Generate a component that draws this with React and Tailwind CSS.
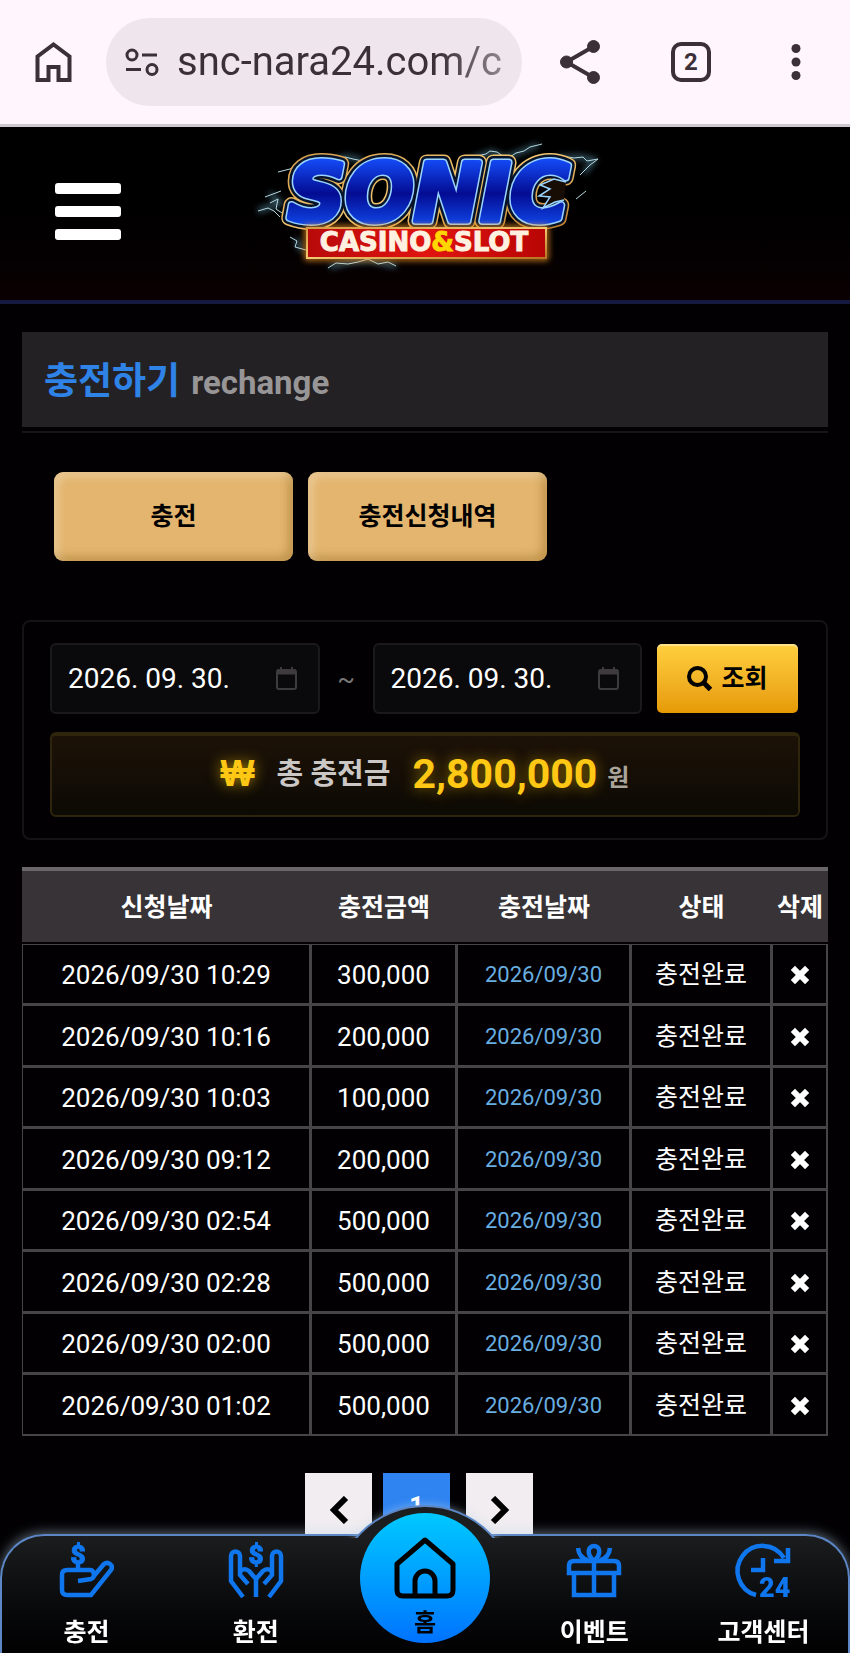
import { useState } from 'react';

const deposits = [
  { requestedAt: '2026/09/30 10:29', amount: '300,000', paidAt: '2026/09/30', status: '충전완료' },
  { requestedAt: '2026/09/30 10:16', amount: '200,000', paidAt: '2026/09/30', status: '충전완료' },
  { requestedAt: '2026/09/30 10:03', amount: '100,000', paidAt: '2026/09/30', status: '충전완료' },
  { requestedAt: '2026/09/30 09:12', amount: '200,000', paidAt: '2026/09/30', status: '충전완료' },
  { requestedAt: '2026/09/30 02:54', amount: '500,000', paidAt: '2026/09/30', status: '충전완료' },
  { requestedAt: '2026/09/30 02:28', amount: '500,000', paidAt: '2026/09/30', status: '충전완료' },
  { requestedAt: '2026/09/30 02:00', amount: '500,000', paidAt: '2026/09/30', status: '충전완료' },
  { requestedAt: '2026/09/30 01:02', amount: '500,000', paidAt: '2026/09/30', status: '충전완료' },
];

const Logo = () => (
  <svg viewBox="-5 0 360 150" className="w-[360px]" role="img" aria-label="SONIC CASINO&SLOT">
    <defs>
      <linearGradient id="letterBlue" x1="0" y1="0" x2="0" y2="1">
        <stop offset="0.1" stopColor="#1650ff" />
        <stop offset="0.5" stopColor="#030c92" />
        <stop offset="0.9" stopColor="#1250f6" />
      </linearGradient>
      <linearGradient id="gold" x1="0" y1="0" x2="1" y2="1">
        <stop offset="0" stopColor="#d49a45" />
        <stop offset="0.5" stopColor="#f3c870" />
        <stop offset="1" stopColor="#b87420" />
      </linearGradient>
      <linearGradient id="bannerRed" x1="0" y1="0" x2="1" y2="0">
        <stop offset="0" stopColor="#b80a0a" />
        <stop offset="0.5" stopColor="#e01410" />
        <stop offset="1" stopColor="#b80505" />
      </linearGradient>
      <filter id="glow" x="-20%" y="-50%" width="140%" height="200%">
        <feGaussianBlur stdDeviation="3" />
      </filter>
      <text
        id="wordmark"
        x="38"
        y="90"
        fontFamily="DejaVu Sans, sans-serif"
        fontWeight="700"
        fontStyle="italic"
        fontSize="80"
        strokeLinejoin="round"
      >
        SONIC
      </text>
    </defs>

    {/* Lightning */}
    <g fill="none" stroke="#6fb4d0" strokeWidth="4" opacity="0.6" filter="url(#glow)">
      <path d="M84 30 L96 26 L112 29 M215 31 L242 21 L255 27 L288 14" />
      <path d="M306 27 L330 26 L344 29 L334 42 M8 80 L30 72 L20 62 M46 108 L52 120" />
      <path d="M80 136 L98 131 L120 129 L146 135" />
    </g>
    <g fill="none" stroke="#b5d9e2" strokeWidth="1" strokeLinejoin="bevel">
      <path d="M82 30 L90 28 L95 26 L103 28 L113 30 M28 41 L40 38 L46 34" />
      <path d="M210 32 L222 26 L236 23 L240 20 L247 21 L257 28 L266 22 L274 20 L280 16 L292 13" />
      <path d="M300 30 L312 25 L324 27 L333 26 L337 30 L348 28 L340 34 L330 44 M336 60 L326 68" />
      <path d="M8 80 L18 77 L24 80 L30 86 M15 66 L23 63 L31 60 M20 72 L28 68 L26 78 L32 82" />
      <path d="M40 106 L47 110 L45 116 L56 119 M78 137 L86 132 L98 133 L108 131 L118 128 L128 133 L138 131 L146 135" />
    </g>

    {/* Wordmark, outlines from widest to narrowest */}
    <use href="#wordmark" stroke="url(#gold)" strokeWidth="16" />
    <use href="#wordmark" stroke="#06132b" strokeWidth="13" />
    <use href="#wordmark" stroke="#9ad4ff" strokeWidth="8" />
    <use href="#wordmark" fill="url(#letterBlue)" stroke="url(#letterBlue)" strokeWidth="5" />
    {/* Spikes in the mouth of the last letter */}
    <path d="M316 51 L304 48 L290 54 L300 58 L289 65 L300 66 L293 77 L305 71 L314 69 Z" fill="#170d05" />
    <path
      d="M316 51 L304 48 L290 54 L300 58 L289 65 L300 66 L293 77 L305 71 L314 69"
      fill="none"
      stroke="#9ad4ff"
      strokeWidth="1.500"
    />

    {/* Banner */}
    <rect x="57" y="97" width="239" height="30" fill="none" stroke="#ff9a20" strokeWidth="4" filter="url(#glow)" />
    <rect x="57" y="97" width="239" height="30" fill="url(#bannerRed)" stroke="url(#gold)" strokeWidth="2" />
    <text
      x="174"
      y="120"
      textAnchor="middle"
      fill="#fff1e0"
      stroke="#fff1e0"
      fontFamily="DejaVu Sans, sans-serif"
      fontWeight="700"
      fontSize="26"
    >
      CASINO<tspan fill="#ffd600" stroke="#ffd600">&amp;</tspan>SLOT
    </text>
  </svg>
);

const BrowserBar = () => (
  <div className="flex h-[127px] items-center border-b-[3px] border-[#cfc8ce] bg-[#fff5fd] text-[#3b3038]">
    <button type="button" aria-label="Home" className="ml-[35px] shrink-0">
      <svg width="37" height="40" viewBox="0 0 37 40" fill="none" stroke="currentColor" strokeWidth="4">
        <path d="M2.500 38 V14.500 L18.500 2.500 L34.500 14.500 V38 H23.500 V25 H13.500 V38 Z" />
      </svg>
    </button>
    <div className="ml-[34px] flex h-[88px] min-w-0 flex-1 items-center overflow-hidden rounded-full bg-[#efe5ec] pl-[19px]">
      <svg width="34" height="28" viewBox="0 0 34 28" fill="none" stroke="currentColor" strokeWidth="3" className="shrink-0">
        <circle cx="7" cy="7" r="5" />
        <path d="M17 7 H32 M1 21.500 H16" />
        <circle cx="27" cy="21.500" r="5" />
      </svg>
      <span className="ml-[18px] whitespace-nowrap bg-linear-to-r from-[#3b3038] from-80% to-[#8f868c] bg-clip-text text-[40px] leading-[52px] text-transparent">
        snc-nara24.com/c
      </span>
    </div>
    <button type="button" aria-label="Share" className="ml-[38px] shrink-0">
      <svg width="40" height="44" viewBox="0 0 40 44" fill="currentColor" stroke="currentColor">
        <path d="M33.500 6.500 L6.500 22 L33.500 37.500" fill="none" strokeWidth="4" />
        <circle cx="33.500" cy="6.500" r="6" />
        <circle cx="6.500" cy="22" r="6" />
        <circle cx="33.500" cy="37.500" r="6" />
      </svg>
    </button>
    <button
      type="button"
      className="ml-[71px] flex size-[40px] shrink-0 items-center justify-center rounded-[10px] border-4 border-current text-[24px] font-bold leading-none"
    >
      2
    </button>
    <button type="button" aria-label="Menu" className="ml-[80px] mr-[49px] shrink-0">
      <svg width="10" height="38" viewBox="0 0 10 38" fill="currentColor">
        <circle cx="5" cy="5.500" r="4.500" />
        <circle cx="5" cy="19" r="4.500" />
        <circle cx="5" cy="32.500" r="4.500" />
      </svg>
    </button>
  </div>
);

const DateField = ({ label, value, onChange }) => (
  <div className="flex h-[71px] min-w-0 flex-1 items-center rounded-md border-2 border-[#1a191b] bg-[#0a090b] pl-4 pr-[21px]">
    <input
      type="text"
      aria-label={label}
      value={value}
      onChange={(e) => onChange(e.target.value)}
      className="min-w-0 flex-1 bg-transparent text-[28px] leading-9 text-white outline-none"
    />
    <svg width="21" height="23" viewBox="0 0 21 23" fill="none" stroke="#3d3b3d" strokeWidth="2" className="shrink-0">
      <rect x="1" y="3" width="19" height="19" rx="2" />
      <path d="M1 5 H20" strokeWidth="5" />
      <path d="M5 0 V4 M16 0 V4" />
    </svg>
  </div>
);

const DeleteIcon = () => (
  <svg width="20" height="20" viewBox="0 0 20 20" stroke="#fff" strokeWidth="6" strokeLinecap="square" strokeLinejoin="round" className="mx-auto">
    <path d="M5 5 L15 15 M15 5 L5 15" />
  </svg>
);

const navIcon = 'h-[54px] w-[54px] overflow-visible text-[#0f76ee]';

const DepositIcon = () => (
  <svg viewBox="0 0 54 54" className={navIcon} fill="none" stroke="currentColor" strokeWidth="4.500">
    <path d="M18 37 L31 35 C36 33 34 26 30 26 H7 Q2 26 2 31 V46 Q2 51 7 51 H31 L51 26 C54 21 48 17 44 20 L33 33" />
    <path d="M18 20 V26" />
    <text x="18" y="20" textAnchor="middle" fill="currentColor" strokeWidth="1" fontSize="26" fontWeight="900">$</text>
  </svg>
);

const WithdrawIcon = () => (
  <svg viewBox="0 0 54 54" className={navIcon} fill="none" stroke="currentColor" strokeWidth="4.500">
    <path d="M14 53 L2 37 V12 C2 6 11 6 11 12 V31 L19 40 M11 29 C12 24 17 25 20 27 L27 35 V53" />
    <path d="M40 53 L52 37 V12 C52 6 43 6 43 12 V31 L35 40 M43 29 C42 24 37 25 34 27 L27 35" />
    <text x="27" y="20" textAnchor="middle" fill="currentColor" strokeWidth="1" fontSize="26" fontWeight="900">$</text>
  </svg>
);

const GiftIcon = () => (
  <svg viewBox="0 0 54 54" className={navIcon} fill="none" stroke="currentColor" strokeWidth="4.500">
    <path d="M2 29 V22 Q2 17 7 17 H47 Q52 17 52 22 V29 Z M7 29 V51 H47 V29 M27 17 V51" />
    <path d="M27 17 C19 10 21 2 27 2 C33 2 35 10 27 17" />
    <path d="M11 4 Q12 14 21 16 M43 4 Q42 14 33 16" />
  </svg>
);

const SupportIcon = () => (
  <svg viewBox="0 0 54 54" className={navIcon} fill="none" stroke="currentColor" strokeWidth="4.500">
    <path d="M20 51 A25 25 0 1 1 48 14" />
    <path d="M52 4 V17 H38 M27 14 V26 H15" />
    <text x="23" y="53" fill="currentColor" stroke="none" fontSize="27" fontWeight="900">24</text>
  </svg>
);

const NavItem = ({ icon, label }) => (
  <a href="#" className="flex flex-1 flex-col items-center pt-2">
    {icon}
    <span className="mt-[17px] text-[25px] font-bold leading-9 text-white">{label}</span>
  </a>
);

const BottomNav = () => (
  <nav className="fixed inset-x-0 bottom-0 flex h-[119px] rounded-t-[44px] border-2 border-b-0 border-[#5c86c4] bg-linear-to-b from-[#1b1d1e] to-[#020203] shadow-[0_-2px_12px_rgba(190,215,235,0.45)]">
    {/* Raised part behind the home button */}
    <div className="absolute bottom-[115px] left-1/2 h-[44px] w-[200px] -translate-x-1/2 overflow-hidden">
      <div className="mx-auto mt-[11px] size-[182px] rounded-full border-2 border-[#5c86c4] bg-[#1b1d1e] shadow-[0_0_10px_rgba(190,215,235,0.5)]" />
    </div>
    <NavItem icon={<DepositIcon />} label="충전" />
    <NavItem icon={<WithdrawIcon />} label="환전" />
    <div className="relative flex-1">
      <a
        href="#"
        className="absolute -top-[23px] left-1/2 flex size-[130px] -translate-x-1/2 flex-col items-center rounded-full bg-linear-to-b from-[#00c8ff] to-[#0072ff] pt-6 text-black"
      >
        <svg width="62" height="62" viewBox="0 0 62 62" fill="none" stroke="currentColor" strokeWidth="5" strokeLinejoin="round">
          <path d="M3 27 L31 3 L59 27 V53 Q59 59 53 59 H9 Q3 59 3 53 Z M21 59 V44 A10 10 0 0 1 41 44 V59" />
        </svg>
        <span className="mt-[6px] text-[24px] font-bold leading-9">홈</span>
      </a>
    </div>
    <NavItem icon={<GiftIcon />} label="이벤트" />
    <NavItem icon={<SupportIcon />} label="고객센터" />
  </nav>
);

const tabButton =
  'h-[89px] w-[239px] rounded-[9px] bg-[#e3b56e] text-[25px] font-bold leading-9 text-black shadow-[inset_5px_5px_8px_rgba(255,255,255,0.25),inset_-5px_-5px_8px_rgba(120,80,0,0.3)]';

export default function App() {
  const [from, setFrom] = useState('2026. 09. 30.');
  const [to, setTo] = useState('2026. 09. 30.');

  return (
    <div className="min-h-screen bg-[#020003] font-['Roboto','Noto_Sans_CJK_KR',sans-serif] text-white">
      <BrowserBar />

      {/* Site header */}
      <header className="grid h-[177px] grid-cols-[1fr_auto_1fr] items-center border-b-4 border-[#15183f] bg-linear-to-b from-black to-[#0a0002]">
        <button type="button" aria-label="메뉴" className="-mt-1 ml-[55px] flex w-[66px] flex-col gap-3">
          <span className="h-[11px] rounded-[3px] bg-white" />
          <span className="h-[11px] rounded-[3px] bg-white" />
          <span className="h-[11px] rounded-[3px] bg-white" />
        </button>
        <a href="#" className="-mt-4">
          <Logo />
        </a>
      </header>

      <main className="px-[22px] pt-7 pb-24">
        <div className="border-b-2 border-[#171517] pb-1">
          <h1 className="flex h-[95px] items-center bg-[#232123] pt-1 pl-[22px] text-[37px] font-bold leading-[56px] text-[#2f83e6]">
            충전하기
            <small className="ml-[11px] pt-[2px] text-[33px] text-[#989597]">rechange</small>
          </h1>
        </div>

        <div className="mt-[39px] flex gap-[15px] pl-8">
          <button type="button" className={tabButton}>충전</button>
          <button type="button" className={tabButton}>충전신청내역</button>
        </div>

        {/* Search box */}
        <section className="mt-[59px] rounded-lg border-2 border-[#151315] px-[26px] py-[21px]">
          <form className="flex items-center pr-[2px]" onSubmit={(e) => e.preventDefault()}>
            <DateField label="시작일" value={from} onChange={setFrom} />
            <span className="w-[53px] text-center text-[26px] leading-9 text-[#777]">~</span>
            <DateField label="종료일" value={to} onChange={setTo} />
            <button
              type="submit"
              className="ml-[15px] flex h-[69px] w-[141px] shrink-0 items-center justify-center gap-[9px] rounded-[5px] bg-linear-to-b from-[#ffd03e] to-[#e69a02] text-[25px] font-bold leading-9 text-black shadow-[inset_0_2px_1px_rgba(255,255,255,0.4)]"
            >
              <svg width="25" height="25" viewBox="0 0 25 25" fill="none" stroke="currentColor" strokeWidth="4">
                <circle cx="10.500" cy="10.500" r="8.500" />
                <path d="M17 17 L23.500 23.500" strokeWidth="5" />
              </svg>
              조회
            </button>
          </form>
          <p className="mt-[18px] flex h-[85px] items-center justify-center rounded-md border-2 border-t-4 border-[#2f250c] bg-linear-to-b from-[#1d1208] to-[#0c0a04] pb-1 leading-[44px]">
            <span className="font-['Liberation_Sans',sans-serif] text-[36px] font-bold text-[#ffc814] [text-shadow:0_0_14px_rgba(255,200,0,0.6)]">₩</span>
            <span className="ml-[22px] text-[29px] font-bold text-[#cbc7c5]">총 충전금</span>
            <strong className="ml-[22px] text-[41px] font-bold text-[#ffc814] [text-shadow:0_0_14px_rgba(255,200,0,0.5)]">2,800,000</strong>
            <span className="ml-[10px] pt-2 text-[24px] font-bold text-[#aaa59a]">원</span>
          </p>
        </section>

        {/* Deposit history */}
        <table className="mt-[27px] w-full table-fixed border-separate border-spacing-0 text-center">
          <colgroup>
            <col />
            <col className="w-[146px]" />
            <col className="w-[174px]" />
            <col className="w-[141px]" />
            <col className="w-[56px]" />
          </colgroup>
          <thead>
            <tr className="h-[77px] text-[25px] leading-9">
              {['신청날짜', '충전금액', '충전날짜', '상태', '삭제'].map((head) => (
                <th
                  key={head}
                  className="whitespace-nowrap border-t-4 border-b-2 border-t-[#6a676a] border-b-[#020003] bg-[#373336] p-0 pt-[3px] font-bold"
                >
                  {head}
                </th>
              ))}
            </tr>
          </thead>
          <tbody className="[&_td]:border [&_td]:border-r-2 [&_td]:border-b-2 [&_td]:border-[#474447] [&_td]:p-0 [&_td]:pt-[2px]">
            {deposits.map((row) => (
              <tr key={row.requestedAt} className="h-[61px] text-[26px] leading-9 even:h-[62px]">
                <td>{row.requestedAt}</td>
                <td>{row.amount}</td>
                <td className="text-[22px] text-[#68aee0]">{row.paidAt}</td>
                <td className="text-[25px]">{row.status}</td>
                <td>
                  <button type="button" aria-label="삭제" className="block w-full">
                    <DeleteIcon />
                  </button>
                </td>
              </tr>
            ))}
          </tbody>
        </table>

        <div className="mt-[37px] flex justify-center gap-[11px] pr-3">
          <button type="button" aria-label="이전" className="flex size-[67px] items-center justify-center bg-[#f1edf0] pt-[6px]">
            <svg width="20" height="28" viewBox="0 0 20 28" fill="none" stroke="#000" strokeWidth="6">
              <path d="M17 2 L5 14 L17 26" />
            </svg>
          </button>
          <button type="button" className="size-[67px] bg-[#2f84f2] text-[25px] font-bold leading-9 text-white">1</button>
          <button type="button" aria-label="다음" className="ml-[5px] flex size-[67px] items-center justify-center bg-[#f1edf0] pt-[6px]">
            <svg width="20" height="28" viewBox="0 0 20 28" fill="none" stroke="#000" strokeWidth="6">
              <path d="M3 2 L15 14 L3 26" />
            </svg>
          </button>
        </div>
      </main>

      <BottomNav />
    </div>
  );
}
